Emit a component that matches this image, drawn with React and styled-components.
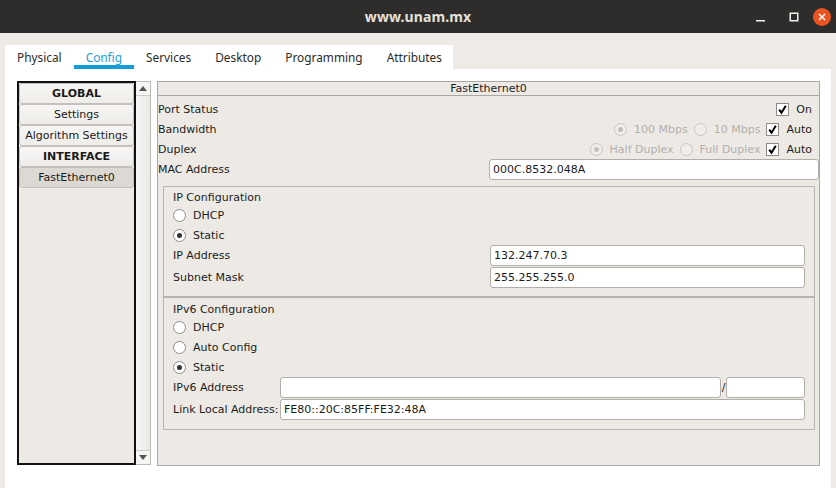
import React from 'react';
import styled, { createGlobalStyle } from 'styled-components';

const GlobalStyle = createGlobalStyle`
  html, body {
    margin: 0;
    padding: 0;
    background: #eeebe7;
  }
  * {
    box-sizing: border-box;
  }
`;

const Window = styled.div`
  width: 836px;
  height: 488px;
  display: flex;
  flex-direction: column;
  background: #eeebe7;
  font-family: "DejaVu Sans", sans-serif;
  font-size: 11px;
  color: #1c1c1c;
  overflow: hidden;
`;

const TitleBar = styled.div`
  height: 33px;
  flex: none;
  background: #2f2d2c;
  display: grid;
  grid-template-columns: 1fr auto 1fr;
  align-items: center;
`;

const Title = styled.div`
  grid-column: 2;
  font-family: "Noto Sans", sans-serif;
  font-weight: 700;
  font-size: 14px;
  color: #e4e0da;
  letter-spacing: 0.1px;
`;

const Controls = styled.div`
  justify-self: end;
  display: flex;
  align-items: center;
  height: 100%;
  padding-right: 2px;
`;

const CtrlButton = styled.div`
  width: ${p => p.w}px;
  height: 33px;
  display: flex;
  align-items: center;
  justify-content: center;
`;

const CloseDot = styled.div`
  width: 18px;
  height: 18px;
  border-radius: 50%;
  background: #e95420;
  display: flex;
  align-items: center;
  justify-content: center;
`;

const Body = styled.div`
  flex: 1;
  display: flex;
  flex-direction: column;
  padding: 12px 5px 0 5px;
`;

const TabBar = styled.div`
  width: 448px;
  height: 24px;
  background: #fff;
  display: flex;
`;

const Tab = styled.div`
  height: 24px;
  padding: 1px 12px 0 12px;
  font-family: "Noto Sans", sans-serif;
  font-size: 11.85px;
  line-height: 22px;
  color: ${p => (p.active ? '#1a9fd9' : '#2b2b2b')};
  border-bottom: 4px solid ${p => (p.active ? '#0f9ed8' : 'transparent')};
`;

const Content = styled.div`
  flex: 1;
  width: 826px;
  background: #fff;
  display: flex;
  padding: 12px 11px 22px 12px;
  gap: 6px;
`;

const ListArea = styled.div`
  display: flex;
  width: 134px;
  height: 384px;
`;

const List = styled.div`
  width: 119px;
  border: 2px solid #111;
  background: #edeae6;
  display: flex;
  flex-direction: column;
`;

const ListItem = styled.div`
  height: 21px;
  display: flex;
  align-items: center;
  justify-content: center;
  border: 1px solid #c4c1bc;
  border-radius: 3px;
  background: ${p => (p.selected ? '#dcd9d4' : 'linear-gradient(#f7f6f4, #efedea)')};
  font-weight: ${p => (p.bold ? 700 : 400)};
  color: #1a1a1a;
  white-space: nowrap;
`;

const ScrollBar = styled.div`
  width: 15px;
  border: 1px solid #bcbab6;
  border-left: none;
  background: linear-gradient(90deg, #f7f6f5, #ebe9e6);
  display: flex;
  flex-direction: column;
  justify-content: space-between;
`;

const ScrollBtn = styled.div`
  height: 14px;
  display: flex;
  align-items: center;
  justify-content: center;
  background: #f6f5f3;
  border-${p => (p.down ? 'top' : 'bottom')}: 1px solid #cfcdc9;
`;

const Panel = styled.div`
  flex: 1;
  height: 385px;
  border: 1px solid #a9a7a3;
  background: #edeae6;
  display: flex;
  flex-direction: column;
`;

const PanelHeader = styled.div`
  height: 14px;
  border-bottom: 1px solid #a9a7a3;
  text-align: center;
  line-height: 13px;
  margin-bottom: 3px;
`;

const Row = styled.div`
  height: 20px;
  display: flex;
  align-items: center;
  justify-content: space-between;
  padding-right: 7px;
`;

const FieldRow = styled.div`
  height: 21px;
  display: grid;
  grid-template-columns: ${p => p.cols};
  align-items: center;
  margin-bottom: ${p => p.mb || 0}px;
`;

const Options = styled.div`
  display: flex;
  align-items: center;
  gap: 6px;
`;

const Option = styled.div`
  display: flex;
  align-items: center;
  gap: 7px;
  color: ${p => (p.disabled ? '#b3b0ac' : '#1c1c1c')};
`;

const Radio = styled.span`
  width: 13px;
  height: 13px;
  border-radius: 50%;
  border: 1px solid ${p => (p.disabled ? '#c8c5c1' : '#8f8c88')};
  background: ${p => (p.disabled ? '#f0eeeb' : '#fff')};
  display: flex;
  align-items: center;
  justify-content: center;
  flex: none;
  &::after {
    content: '';
    width: 5px;
    height: 5px;
    border-radius: 50%;
    background: ${p => (p.disabled ? '#c3c0bc' : '#333')};
    display: ${p => (p.checked ? 'block' : 'none')};
  }
`;

const Check = styled.span`
  width: 13px;
  height: 13px;
  border: 1px solid #8f8c88;
  background: #fff;
  display: flex;
  align-items: center;
  justify-content: center;
  flex: none;
`;

const Input = styled.div`
  height: 21px;
  border: 1px solid #b2afab;
  border-radius: 3px;
  background: #fff;
  padding-left: 3px;
  display: flex;
  align-items: center;
  white-space: nowrap;
`;

const Group = styled.div`
  margin: 0 4px 0 5px;
  border: 1px solid #b7b4b0;
  padding: ${p => p.pt}px 9px ${p => p.pb}px 9px;
`;

const GroupTitle = styled.div`
  height: 14px;
  line-height: 14px;
`;

const RadioRow = styled.div`
  height: 20px;
  display: flex;
  align-items: center;
  gap: 7px;
`;

const Slash = styled.div`
  text-align: center;
`;

const Tick = () => (
  <svg width="11" height="11" viewBox="0 0 11 11">
    <path d="M2.2 5.6 L4.5 8.7 L8.8 1.8" fill="none" stroke="#000" strokeWidth="2" />
  </svg>
);

const CheckOption = ({ label }) => (
  <Option>
    <Check><Tick /></Check>
    {label}
  </Option>
);

const RadioOption = ({ label, checked, disabled }) => (
  <Option disabled={disabled}>
    <Radio checked={checked} disabled={disabled} />
    {label}
  </Option>
);

export default function App() {
  const tabs = ['Physical', 'Config', 'Services', 'Desktop', 'Programming', 'Attributes'];
  return (
    <Window>
      <GlobalStyle />
      <TitleBar>
        <Title>www.unam.mx</Title>
        <Controls>
          <CtrlButton w={34}>
            <svg width="10" height="10" viewBox="0 0 10 10">
              <rect x="0" y="8" width="9" height="1.5" fill="#f2f0ec" />
            </svg>
          </CtrlButton>
          <CtrlButton w={32}>
            <svg width="10" height="10" viewBox="0 0 10 10">
              <rect x="1.25" y="1.25" width="7.5" height="7.5" fill="none" stroke="#f2f0ec" strokeWidth="1.5" />
            </svg>
          </CtrlButton>
          <CtrlButton w={24}>
            <CloseDot>
              <svg width="8" height="8" viewBox="0 0 8 8">
                <path d="M1 1 L7 7 M7 1 L1 7" stroke="#fff" strokeWidth="1.5" />
              </svg>
            </CloseDot>
          </CtrlButton>
        </Controls>
      </TitleBar>
      <Body>
        <TabBar>
          {tabs.map(t => (
            <Tab key={t} active={t === 'Config'}>{t}</Tab>
          ))}
        </TabBar>
        <Content>
          <ListArea>
            <List>
              <ListItem bold>GLOBAL</ListItem>
              <ListItem>Settings</ListItem>
              <ListItem>Algorithm Settings</ListItem>
              <ListItem bold>INTERFACE</ListItem>
              <ListItem selected>FastEthernet0</ListItem>
            </List>
            <ScrollBar>
              <ScrollBtn>
                <svg width="8" height="5" viewBox="0 0 8 5"><path d="M0 5 L4 0 L8 5 Z" fill="#555" /></svg>
              </ScrollBtn>
              <ScrollBtn down>
                <svg width="8" height="5" viewBox="0 0 8 5"><path d="M0 0 L8 0 L4 5 Z" fill="#555" /></svg>
              </ScrollBtn>
            </ScrollBar>
          </ListArea>
          <Panel>
            <PanelHeader>FastEthernet0</PanelHeader>
            <Row>
              Port Status
              <CheckOption label="On" />
            </Row>
            <Row>
              Bandwidth
              <Options>
                <RadioOption label="100 Mbps" checked disabled />
                <RadioOption label="10 Mbps" disabled />
                <CheckOption label="Auto" />
              </Options>
            </Row>
            <Row>
              Duplex
              <Options>
                <RadioOption label="Half Duplex" checked disabled />
                <RadioOption label="Full Duplex" disabled />
                <CheckOption label="Auto" />
              </Options>
            </Row>
            <FieldRow cols="331px 1fr" mb={6}>
              MAC Address
              <Input>000C.8532.048A</Input>
            </FieldRow>
            <Group pt={4} pb={8}>
              <GroupTitle>IP Configuration</GroupTitle>
              <RadioRow><Radio />DHCP</RadioRow>
              <RadioRow><Radio checked />Static</RadioRow>
              <FieldRow cols="317px 1fr" mb={1}>
                IP Address
                <Input>132.247.70.3</Input>
              </FieldRow>
              <FieldRow cols="317px 1fr">
                Subnet Mask
                <Input>255.255.255.0</Input>
              </FieldRow>
            </Group>
            <Group pt={5} pb={9}>
              <GroupTitle>IPv6 Configuration</GroupTitle>
              <RadioRow><Radio />DHCP</RadioRow>
              <RadioRow><Radio />Auto Config</RadioRow>
              <RadioRow><Radio checked />Static</RadioRow>
              <FieldRow cols="107px 441px 5px 1fr" mb={1}>
                IPv6 Address
                <Input />
                <Slash>/</Slash>
                <Input />
              </FieldRow>
              <FieldRow cols="107px 1fr">
                Link Local Address:
                <Input>FE80::20C:85FF:FE32:48A</Input>
              </FieldRow>
            </Group>
          </Panel>
        </Content>
      </Body>
    </Window>
  );
}
